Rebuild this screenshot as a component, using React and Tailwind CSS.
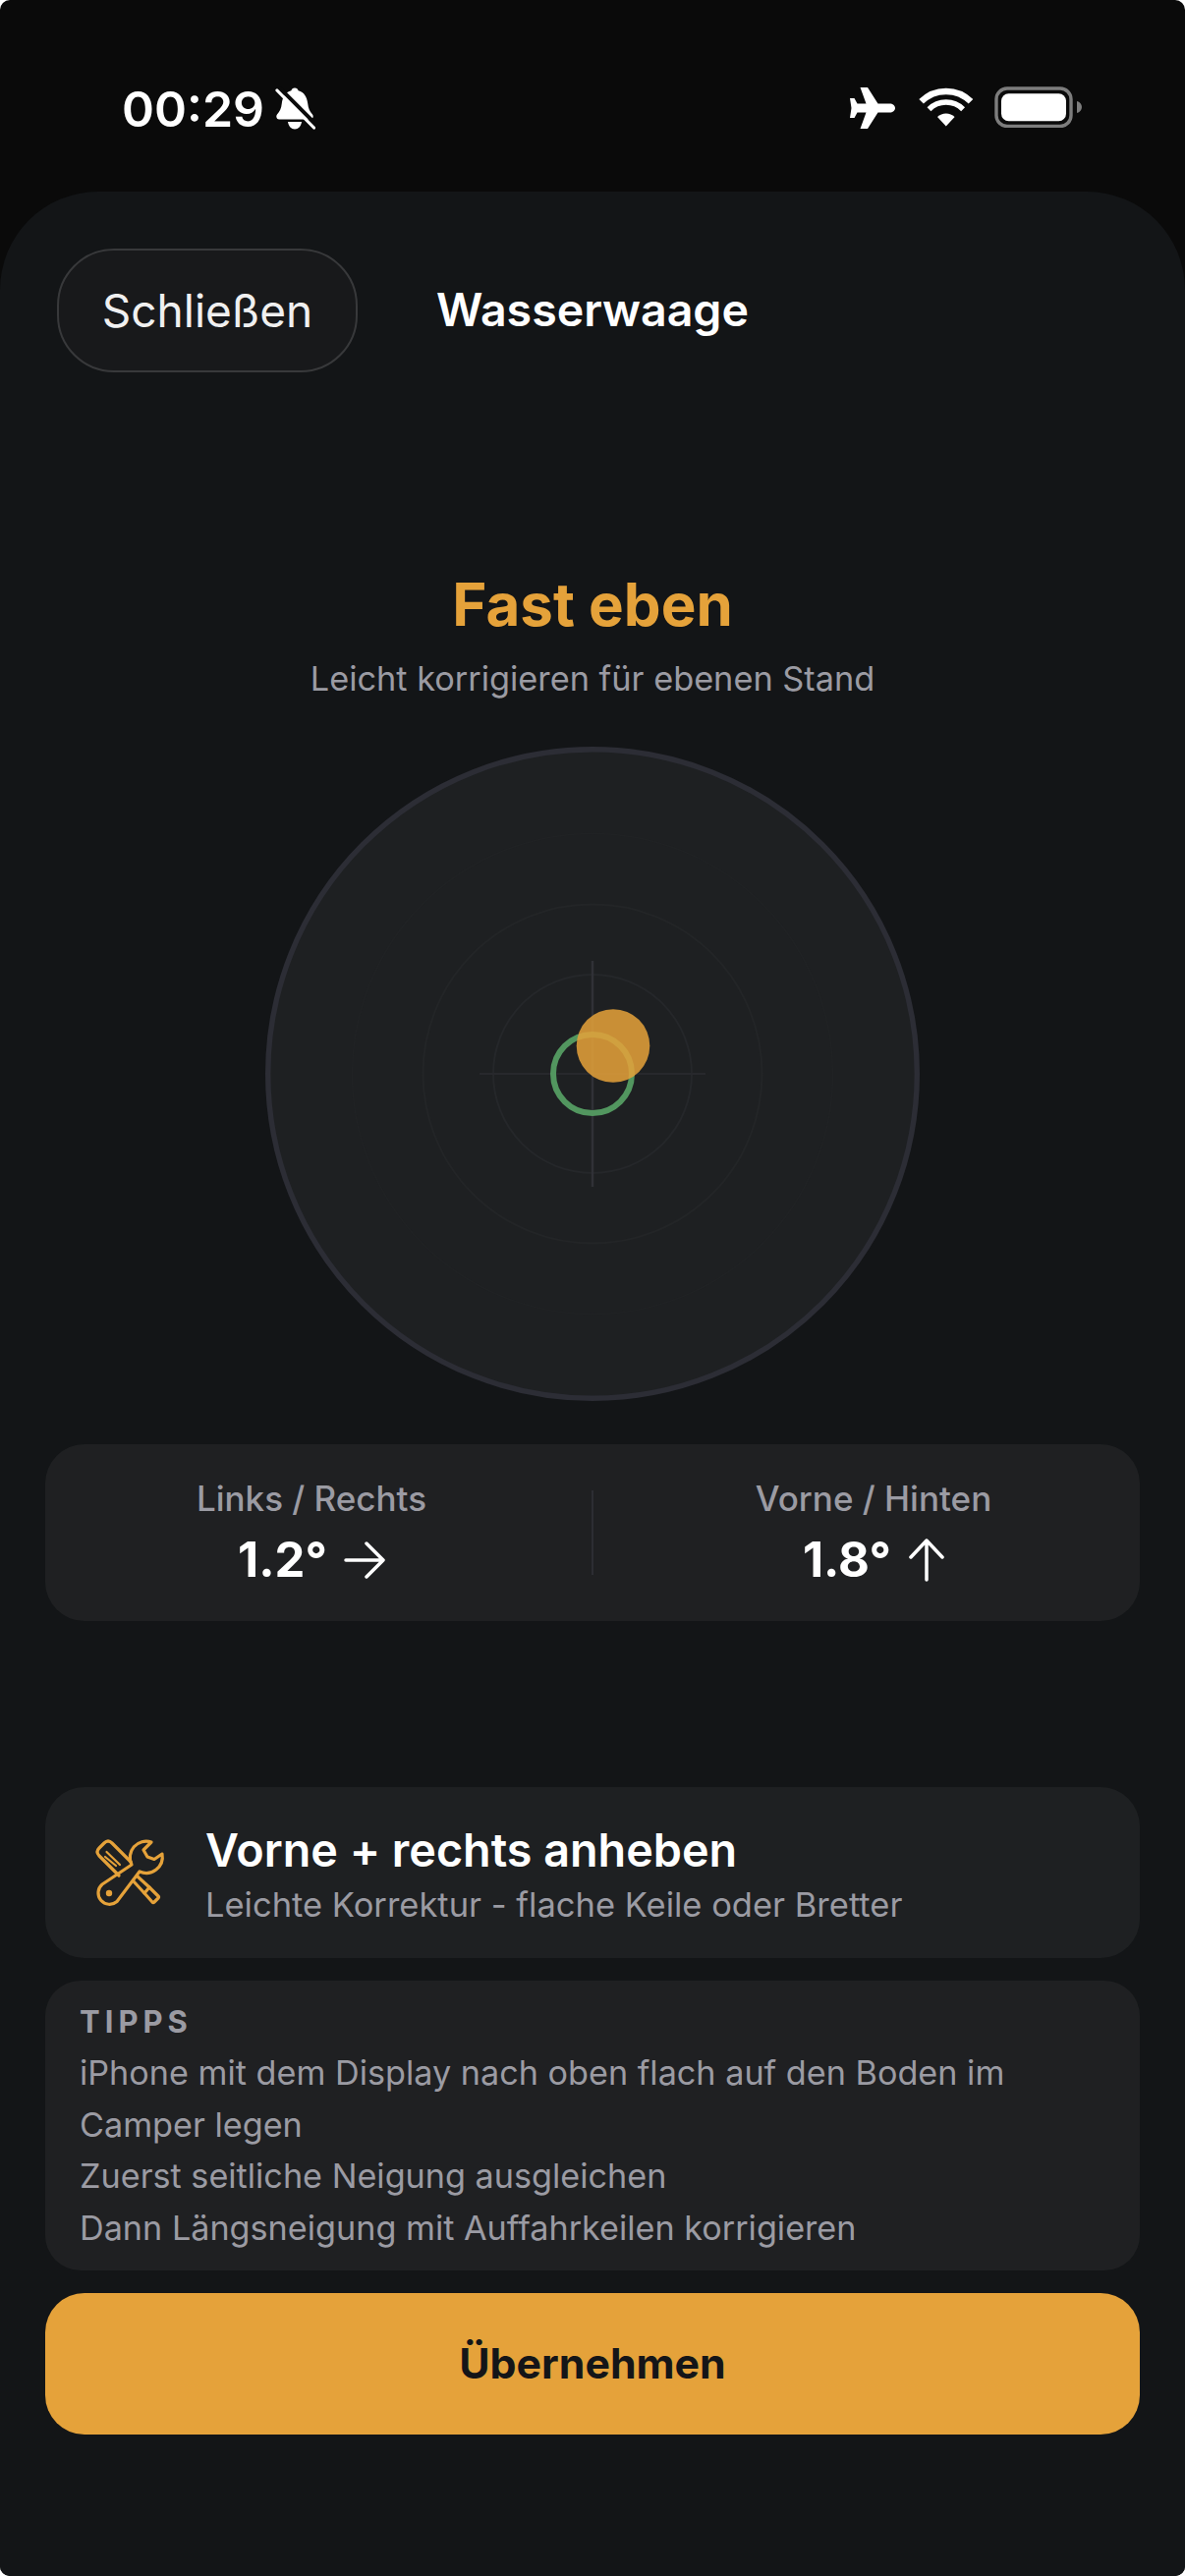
import React from "react";

function Bell() {
  return (
    <svg width="42" height="46" viewBox="179 18 42 46" className="ml-[10px] mt-[2px]">
      <path d="M200 19.500c2 0 3.200 1.300 3.600 2.800 6 1.600 8.800 6.500 9.600 13 .6 5 1.800 8 4.800 11.200 1.400 1.600.6 5-2 5H184c-2.600 0-3.400-3.400-2-5 3-3.200 4.200-6.200 4.800-11.200.8-6.500 3.600-11.400 9.600-13 .4-1.500 1.600-2.800 3.600-2.800z" fill="#fff" />
      <path d="M193 54h14c-.6 4.500-3.400 7.500-7 7.500s-6.400-3-7-7.500z" fill="#fff" />
      <path d="M184 19 221 56" stroke="#0a0a0a" strokeWidth="4" />
      <path d="M182 22 219.500 60" stroke="#fff" strokeWidth="3.200" strokeLinecap="round" />
    </svg>
  );
}

function Plane() {
  return (
    <svg width="48" height="44" viewBox="25.500 19 48 44">
      <path d="M72.500 41c0-2.500-2.500-4.500-5.500-4.500H55L44.500 20H37l6 16.500h-9L31 31h-4.500L28 41l-1.500 10H31l3-5.500h9L37 62h7.500L55 45.500h12c3 0 5.500-2 5.500-4.500z" fill="#fff" />
    </svg>
  );
}

function Wifi() {
  return (
    <svg width="56" height="42" viewBox="95.500 18.500 56 42" className="ml-[23px]">
      <path d="M98.100 33.800A35.700 35.700 0 0 1 148.500 33.800" fill="none" stroke="#fff" strokeWidth="6.500" />
      <path d="M106 41.700A24.500 24.500 0 0 1 140.600 41.700" fill="none" stroke="#fff" strokeWidth="5.500" />
      <path d="M123.300 59l-8.800-9.500a12.500 12.500 0 0 1 17.600 0z" fill="#fff" />
    </svg>
  );
}

function Battery() {
  return (
    <svg width="90" height="42" viewBox="172 18.500 90 42" className="ml-[21px]">
      <rect x="174" y="20.500" width="76" height="38.500" rx="11" fill="none" stroke="#7d7d7d" strokeWidth="3.400" />
      <rect x="179" y="25.700" width="66" height="28" rx="7.500" fill="#fff" />
      <path d="M256 33.500c3 .8 5 3 5 6s-2 5.200-5 6z" fill="#7d7d7d" />
    </svg>
  );
}

function Tools() {
  return (
    <svg width="85" height="85" viewBox="0 0 85 85" fill="none" stroke="#e5a23a" strokeWidth="3.200" strokeLinejoin="round" strokeLinecap="round" className="absolute left-[44px] top-[46px]">
      <path d="M64 10A16.500 16.500 0 0 0 44 33L14 53a11.500 11.500 0 0 0 15 17.500L52 40A16.500 16.500 0 0 0 75 22L67 27.500 60 25 56 18z" />
      <circle cx="21" cy="62" r="3.200" fill="#e5a23a" stroke="none" />
      <path d="M31 44 11 24Q7 20 11 16L16 11Q20 7 24 11L43 30" />
      <path d="M18.500 20 32 33M17 25 28 34" strokeWidth="2.200" />
      <path d="M46 50 57 62 65 71Q66 72 67 71L71 67Q72 66 71 65L62 56 50 45" />
      <path d="M57 62 62 56" />
    </svg>
  );
}

function Gauge() {
  return (
    <svg width="666" height="666" viewBox="0 0 666 666" className="block">
      <circle cx="333" cy="333" r="330.300" fill="#1e2022" stroke="#2c2d35" strokeWidth="5.400" />
      <circle cx="333" cy="333" r="244.500" fill="none" stroke="#202224" strokeWidth="1.500" />
      <circle cx="333" cy="333" r="172.500" fill="none" stroke="#232527" strokeWidth="2" />
      <circle cx="333" cy="333" r="101" fill="none" stroke="#25272a" strokeWidth="2" />
      <path d="M218 333H448" stroke="#27282c" strokeWidth="2" />
      <path d="M333 218V448" stroke="#303137" strokeWidth="2.500" />
      <circle cx="333" cy="333" r="40" fill="none" stroke="#52965f" strokeWidth="6" />
      <circle cx="354" cy="304.500" r="37.300" fill="#e5a23a" fillOpacity="0.86" />
    </svg>
  );
}

function Reading({ label, value, children }) {
  return (
    <div className="flex-1 flex flex-col items-center">
      <div className="text-[35px] leading-[40px] font-medium text-[#9b9ba3]">{label}</div>
      <div className="mt-[15px] flex items-center text-[49px] leading-[56px] font-bold text-white">
        <span>{value}</span>
        {children}
      </div>
    </div>
  );
}

export default function App() {
  return (
    <div className="w-[1206px] h-[2622px] bg-[#0a0a0a] rounded-[10px] flex flex-col overflow-hidden" style={{ fontFamily: "Inter, 'Noto Sans', sans-serif" }}>
      <div className="h-[195px] shrink-0 pl-[124px] pr-[104px] pt-[86px] flex items-start justify-between">
        <div className="flex items-start">
          <span className="text-[50px] leading-[50px] font-semibold text-white">00:29</span>
          <Bell />
        </div>
        <div className="flex items-start mt-[2px]">
          <Plane />
          <Wifi />
          <Battery />
        </div>
      </div>

      <div className="flex-1 rounded-t-[100px] bg-[#131517] px-[46px] flex flex-col">
        <div className="relative h-[126px] mt-[58px] flex items-center justify-center">
          <button className="absolute left-[12px] top-0 w-[306px] h-[126px] rounded-[58px] border-2 border-[#38393b] bg-[#18191b] text-[46px] text-[#f0f0f0]">Schließen</button>
          <span className="text-[46.500px] font-semibold text-white">Wasserwaage</span>
        </div>

        <div className="mt-[200px] text-center text-[60px] leading-[72px] font-bold text-[#e5a23a]">Fast eben</div>
        <div className="mt-[18px] text-center text-[34.300px] leading-[44px] text-[#9b9ba3]">Leicht korrigieren für ebenen Stand</div>

        <div className="mt-[47px] flex justify-center">
          <Gauge />
        </div>

        <div className="mt-[44px] h-[180px] rounded-[40px] bg-[#1f2022] flex items-center gap-[14px]">
          <Reading label="Links / Rechts" value="1.2°">
            <svg width="42" height="40" viewBox="0 0 42 40" fill="none" stroke="#fff" strokeWidth="3.500" strokeLinecap="round" strokeLinejoin="round" className="ml-[17px]">
              <path d="M2 20H40M23 3 40 20 23 37" />
            </svg>
          </Reading>
          <div className="w-[2px] h-[86px] bg-[#2c2d33]" />
          <Reading label="Vorne / Hinten" value="1.8°">
            <svg width="36" height="44" viewBox="0 0 36 44" fill="none" stroke="#fff" strokeWidth="3.500" strokeLinecap="round" strokeLinejoin="round" className="ml-[18px]">
              <path d="M18 42V2M2 19 18 2 34 19" />
            </svg>
          </Reading>
        </div>

        <div className="relative mt-[169px] h-[174px] rounded-[40px] bg-[#1e2022] pl-[163px] pt-[36px]">
          <Tools />
          <div className="text-[46.700px] leading-[56px] font-semibold text-white">Vorne + rechts anheben</div>
          <div className="mt-[6px] text-[34.500px] leading-[44px] text-[#9b9ba3]">Leichte Korrektur - flache Keile oder Bretter</div>
        </div>

        <div className="mt-[23px] h-[295px] rounded-[36px] bg-[#1f2022] px-[35px] pt-[24px]">
          <div className="text-[31px] leading-[36px] font-bold tracking-[5px] text-[#9b9ba3]">TIPPS</div>
          <div className="mt-[8px] text-[34.200px] leading-[52.700px] text-[#9b9ba3]">
            <div>iPhone mit dem Display nach oben flach auf den Boden im Camper legen</div>
            <div>Zuerst seitliche Neigung ausgleichen</div>
            <div>Dann Längsneigung mit Auffahrkeilen korrigieren</div>
          </div>
        </div>

        <button className="mt-[23px] h-[144px] rounded-[40px] bg-[#e5a23a] text-[42.800px] font-bold text-[#141518]">Übernehmen</button>
      </div>
    </div>
  );
}
